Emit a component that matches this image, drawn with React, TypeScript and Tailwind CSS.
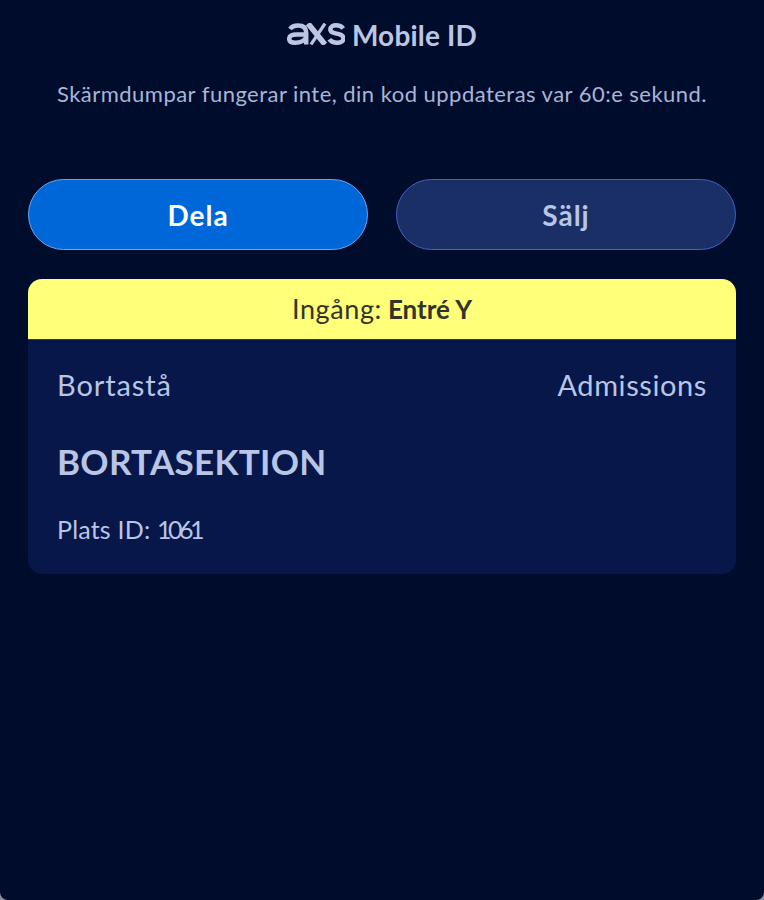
const FONT = { fontFamily: 'Lato, "Noto Sans", sans-serif' }

function AxsLogo() {
  return (
    <svg width="58" height="22" viewBox="0 0 58 22" fill="none" stroke="#bcc6e2" strokeWidth="4.500" className="shrink-0 mb-[3px]">
      {/* a */}
      <path d="M3 6C5 3.200 8 2.500 11 2.500c5.500 0 8.200 2.300 8.200 7v12" />
      <path d="M19 11.500H9.500c-4.500 0-7.300 1.200-7.300 4.300 0 2.700 2.500 3.900 6 3.900 4.800 0 9-1.700 11-5.500" />
      {/* x */}
      <path d="M21 0.500 L38 21.500" strokeWidth="5.500" />
      <path d="M38 0.500 L24 21.500" strokeWidth="3.200" />
      {/* s */}
      <path d="M56.200 5.500C54.500 3.200 51.500 2.300 49 2.300c-3 0-5.600 1.400-5.600 4.100 0 5.600 13 2.700 13 8.900 0 3-2.800 4.500-6 4.500-3.200 0-6.400-1.100-8-3.500" />
    </svg>
  )
}

function ActionButton({ label, primary }: { label: string; primary?: boolean }) {
  return (
    <button
      className={`flex-1 h-[71px] rounded-[36px] border text-[28px] tracking-[1px] font-bold flex items-center justify-center ${
        primary
          ? 'bg-[#0067d9] border-[#6aa6ee] text-white'
          : 'bg-[#1a2f66] border-[#3c62c4] text-[#b9c5e4]'
      }`}
    >
      {label}
    </button>
  )
}

export default function App() {
  return (
    <div className="h-[900px] bg-[#8a8fa5]" style={FONT}>
      <div className="h-full bg-[#000c2c] rounded-b-[8px] px-[28px] flex flex-col">
        {/* Header */}
        <div className="h-[70px] flex items-center justify-center gap-[7px] text-[#bcc6e2]">
          <AxsLogo />
          <span className="text-[28px] tracking-[0.2px] font-bold leading-none">Mobile ID</span>
        </div>
        <p className="h-[48px] text-center text-[22px] tracking-[0.47px] leading-[48px] text-[#a9b5d6] whitespace-nowrap">
          Skärmdumpar fungerar inte, din kod uppdateras var 60:e sekund.
        </p>

        {/* Actions */}
        <div className="mt-[61px] flex gap-[28px]">
          <ActionButton label="Dela" primary />
          <ActionButton label="Sälj" />
        </div>

        {/* Ticket card */}
        <div className="mt-[29px] h-[295px] rounded-[14px] overflow-hidden bg-[#08174a] flex flex-col">
          <div className="h-[61px] shrink-0 bg-[#ffff7a] border-b border-[#3a3a2a] flex items-center justify-center text-[#33332a]">
            <span className="text-[27px] tracking-[0.6px]">Ingång:</span>
            <span className="ml-[6px] text-[26px] font-bold">Entré Y</span>
          </div>
          <div className="px-[29px] text-[#b9c5e4]">
            <div className="mt-[26px] flex justify-between text-[29px] leading-[38px]">
              <span className="tracking-[0.9px]">Bortastå</span>
              <span className="tracking-[0.6px]">Admissions</span>
            </div>
            <h2 className="mt-[35px] text-[35px] tracking-[0.3px] leading-[44px] font-bold">BORTASEKTION</h2>
            <p className="mt-[30px] text-[25px] tracking-[0.2px] leading-[32px]">
              Plats ID: <span className="tracking-[-3.5px]">1061</span>
            </p>
          </div>
        </div>
      </div>
    </div>
  )
}
